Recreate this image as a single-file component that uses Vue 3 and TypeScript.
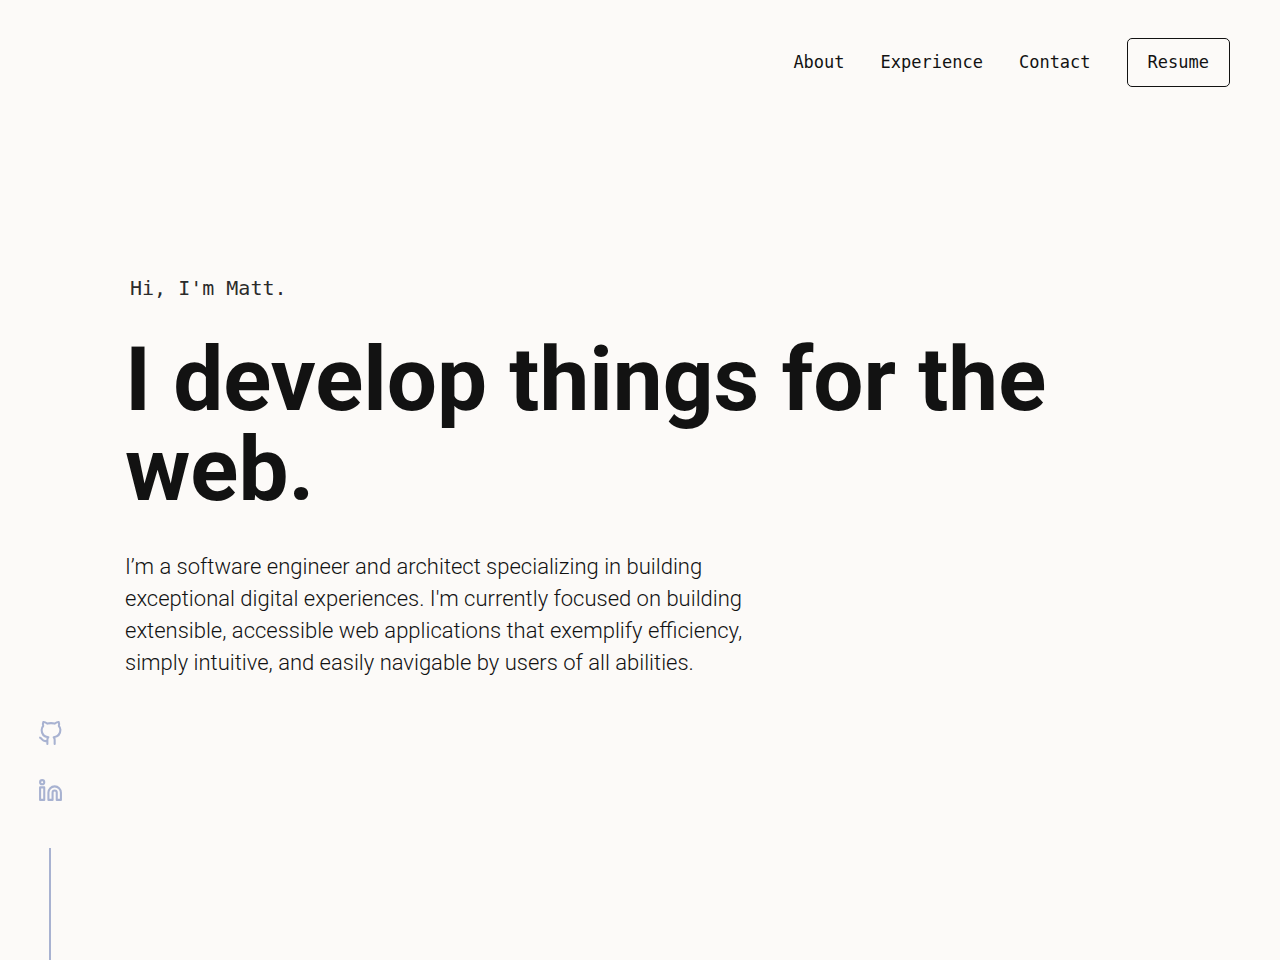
<script setup lang="ts">
interface NavLink {
  label: string
  href: string
}

const links: NavLink[] = [
  { label: 'About', href: '#about' },
  { label: 'Experience', href: '#experience' },
  { label: 'Contact', href: '#contact' },
]
</script>

<template>
  <div class="page">
    <header class="header">
      <nav class="nav" aria-label="Main">
        <a v-for="link in links" :key="link.href" class="nav-link" :href="link.href">{{ link.label }}</a>
        <a class="resume" href="#resume">Resume</a>
      </nav>
    </header>

    <main class="hero">
      <p class="greeting">Hi, I'm Matt.</p>
      <h1 class="title">I develop things for the web.</h1>
      <p class="intro">
        I’m a software engineer and architect specializing in building<br />
        exceptional digital experiences. I'm currently focused on building<br />
        extensible, accessible web applications that exemplify efficiency,<br />
        simply intuitive, and easily navigable by users of all abilities.
      </p>
    </main>

    <aside class="social" aria-label="Social links">
      <a class="social-link" href="#github" aria-label="GitHub">
        <svg viewBox="0 0 24 24" width="25" height="25">
          <path d="M9 19c-5 1.5-5-2.5-7-3m14 6v-3.87a3.37 3.37 0 0 0-.94-2.61c3.14-.35 6.44-1.54 6.44-7A5.44 5.44 0 0 0 20 4.77 5.07 5.07 0 0 0 19.91 1S18.73.65 16 2.48a13.38 13.38 0 0 0-7 0C6.27.65 5.09 1 5.09 1A5.07 5.07 0 0 0 5 4.77a5.44 5.44 0 0 0-1.5 3.78c0 5.42 3.3 6.61 6.44 7A3.37 3.37 0 0 0 9 18.13V22" />
        </svg>
      </a>
      <a class="social-link" href="#linkedin" aria-label="LinkedIn">
        <svg viewBox="0 0 24 24" width="25" height="25">
          <path d="M16 8a6 6 0 0 1 6 6v7h-4v-7a2 2 0 0 0-4 0v7h-4v-7a6 6 0 0 1 6-6z" />
          <rect x="2" y="9" width="4" height="12" />
          <circle cx="4" cy="4" r="2" />
        </svg>
      </a>
      <span class="line"></span>
    </aside>
  </div>
</template>

<style>
body {
  margin: 0;
  background: #fcfaf8;
}
</style>

<style scoped>
.page {
  display: flex;
  flex-direction: column;
  min-height: 100vh;
  box-sizing: border-box;
  background: #fcfaf8;
  color: #121212;
  font-family: Roboto, "Liberation Sans", sans-serif;
}

.header {
  padding: 38px 50px 0;
}

.nav {
  display: flex;
  justify-content: flex-end;
  align-items: center;
  gap: 36px;
  font-family: "DejaVu Sans Mono", monospace;
  font-size: 17px;
  line-height: 23px;
}

.nav-link {
  color: #121212;
  text-decoration: none;
}

.resume {
  padding: 12px 20px;
  border: 1px solid #121212;
  border-radius: 5px;
  color: #121212;
  text-decoration: none;
}

.hero {
  padding: 188px 125px 0;
}

.greeting {
  margin: 0 0 34px 5px;
  color: #2b2b2b;
  font-family: "DejaVu Sans Mono", monospace;
  font-size: 20px;
  line-height: 26px;
}

.title {
  margin: 0;
  font-size: 89px;
  font-weight: 700;
  line-height: 90px;
}

.intro {
  margin: 36px 0 0;
  font-size: 22px;
  font-weight: 350;
  line-height: 32px;
}

.social {
  position: fixed;
  bottom: 0;
  left: 38px;
  display: flex;
  flex-direction: column;
  gap: 32px;
}

.social-link svg {
  display: block;
  overflow: visible;
  fill: none;
  stroke: #a8b2d1;
  stroke-width: 2;
  stroke-linecap: round;
  stroke-linejoin: round;
}

.line {
  width: 2px;
  height: 112px;
  margin: 13px 0 0 11px;
  background: #a8b2d1;
}
</style>
